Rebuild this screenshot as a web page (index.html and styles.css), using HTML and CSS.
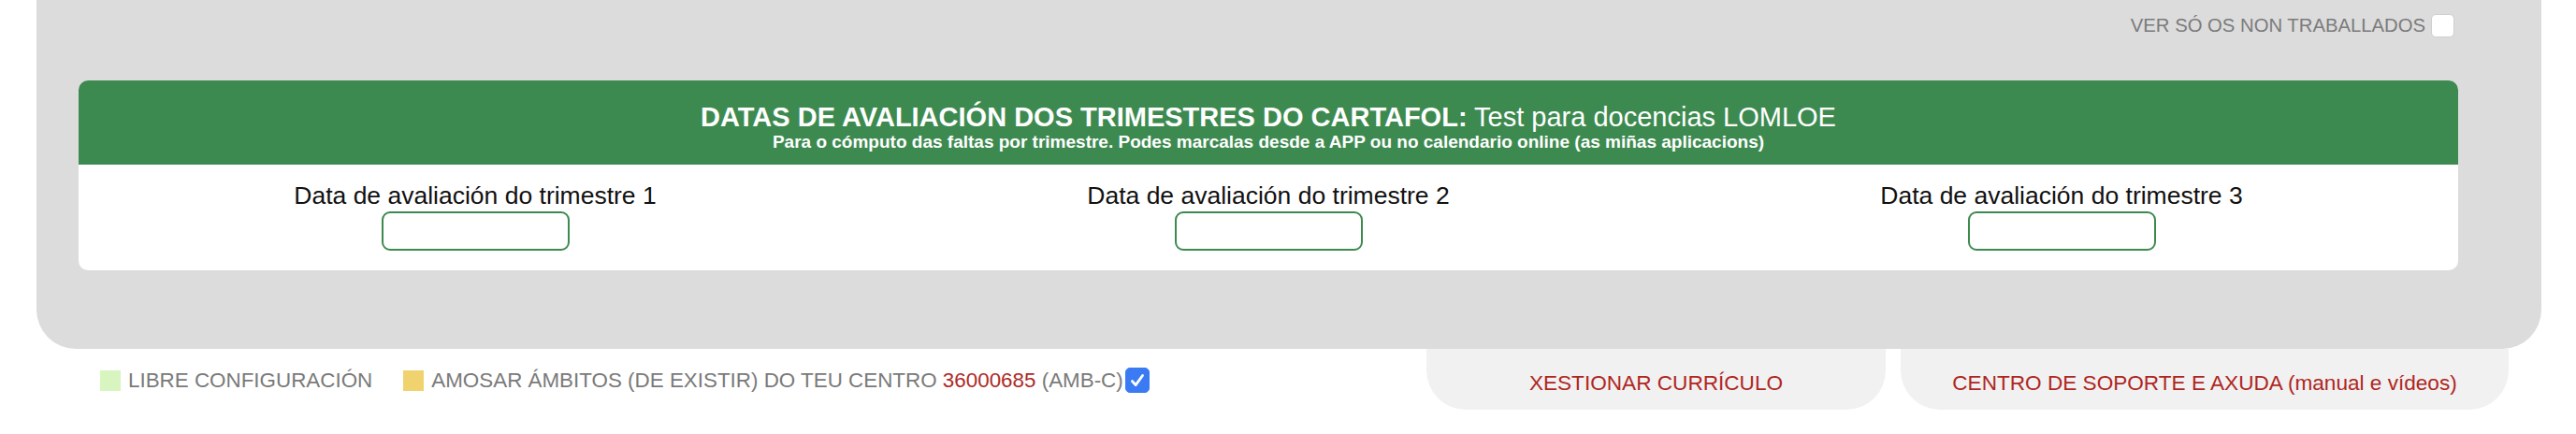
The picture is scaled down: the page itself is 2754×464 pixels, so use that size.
FILE: index.html
```html
<!DOCTYPE html>
<html lang="gl">
<head>
    <meta charset="UTF-8">
    <title>Cartafol - Datas de avaliación</title>
    <link rel="stylesheet" href="styles.css">
</head>
<body>
    <!-- Panel principal -->
    <div class="panel">
        <div class="toolbar">
            <label class="filter">VER SÓ OS NON TRABALLADOS <span class="check"></span></label>
        </div>

        <div class="dates-box">
            <div class="dates-header">
                <div class="dates-title"><b>DATAS DE AVALIACIÓN DOS TRIMESTRES DO CARTAFOL:</b> Test para docencias LOMLOE</div>
                <div class="dates-sub">Para o cómputo das faltas por trimestre. Podes marcalas desde a APP ou no calendario online (as miñas aplicacions)</div>
            </div>
            <div class="dates-body">
                <div class="date-col">
                    <div class="date-label">Data de avaliación do trimestre 1</div>
                    <input type="text" class="date-input">
                </div>
                <div class="date-col">
                    <div class="date-label">Data de avaliación do trimestre 2</div>
                    <input type="text" class="date-input">
                </div>
                <div class="date-col">
                    <div class="date-label">Data de avaliación do trimestre 3</div>
                    <input type="text" class="date-input">
                </div>
            </div>
        </div>
    </div>

    <!-- Lenda e pestanas -->
    <div class="footer">
        <div class="legend">
            <span class="swatch swatch-green"></span>
            <span class="legend-text">LIBRE CONFIGURACIÓN</span>
            <span class="swatch swatch-yellow"></span>
            <span class="legend-text">AMOSAR ÁMBITOS (DE EXISTIR) DO TEU CENTRO <span class="code">36000685</span> (AMB-C)</span>
            <span class="check checked">
                <svg viewBox="0 0 26 26" width="26" height="26"><path d="M7 13.5l4 4.5 8-11" fill="none" stroke="#fff" stroke-width="3" stroke-linecap="round" stroke-linejoin="round"/></svg>
            </span>
        </div>
        <div class="tabs">
            <a class="tab tab-curriculo">XESTIONAR CURRÍCULO</a>
            <a class="tab tab-soporte">CENTRO DE SOPORTE E AXUDA (manual e vídeos)</a>
        </div>
    </div>
</body>
</html>
```

FILE: styles.css
```css
/* General Styles */
body {
    font-family: "Liberation Sans", Arial, sans-serif;
    background-color: #fff;
    margin: 0;
    padding: 0;
}

.panel {
    margin-left: 39px;
    width: 2678px;
    background-color: #dcdcdc;
    border-radius: 0 0 42px 42px;
    padding: 15px 0 84px;
}

.toolbar {
    display: flex;
    justify-content: flex-end;
    padding-right: 93px;
}

.filter {
    display: flex;
    align-items: center;
    font-size: 20.3px;
    color: #7b7b7b;
}

.check {
    display: inline-block;
    width: 25px;
    height: 25px;
    margin-left: 6px;
    background: #fff;
    border: 1px solid #cfcfcf;
    border-radius: 5px;
    box-sizing: border-box;
}

.check.checked {
    width: 26px;
    height: 27px;
    margin-left: 2px;
    background: #3a7bf4;
    border-color: #3a7bf4;
    display: flex;
    align-items: center;
    justify-content: center;
}

/* Caixa de datas */
.dates-box {
    margin: 46px 89px 0 45px;
    background: #fff;
    border-radius: 10px;
    overflow: hidden;
}

.dates-header {
    background-color: #3d8a50;
    color: #fff;
    text-align: center;
    padding: 23px 0 13px;
}

.dates-title {
    font-size: 29px;
    line-height: 32px;
}

.dates-sub {
    font-size: 19px;
    font-weight: bold;
    line-height: 22px;
}

.dates-body {
    display: grid;
    grid-template-columns: 1fr 1fr 1fr;
    padding: 19px 0 21px;
}

.date-col {
    display: flex;
    flex-direction: column;
    align-items: center;
}

.date-label {
    font-size: 26.5px;
    line-height: 28px;
    color: #111;
}

.date-input {
    margin-top: 3px;
    width: 201px;
    height: 42px;
    box-sizing: border-box;
    border: 2px solid #3d8a50;
    border-radius: 9px;
    background: #fff;
    padding: 0 8px;
    font-size: 18px;
}

/* Lenda e pestanas */
.footer {
    display: flex;
    justify-content: space-between;
    align-items: flex-start;
    padding: 0 72px 0 107px;
}

.legend {
    display: flex;
    align-items: center;
    padding-top: 20px;
    font-size: 22.4px;
    color: #7a7a7a;
}

.swatch {
    width: 22px;
    height: 22px;
    margin-right: 8px;
}

.swatch-green {
    background-color: #d8f5bf;
}

.swatch-yellow {
    background-color: #f0d36f;
    margin-left: 33px;
}

.code {
    color: #ad2a26;
}

.tabs {
    display: flex;
    gap: 16px;
}

.tab {
    display: block;
    background-color: #f1f1f1;
    border-radius: 0 0 42px 42px;
    padding: 24px 0 15px;
    font-size: 22.6px;
    line-height: 26px;
    color: #b0261f;
    text-align: center;
}

.tab-curriculo {
    width: 491px;
}

.tab-soporte {
    width: 650px;
}
```
